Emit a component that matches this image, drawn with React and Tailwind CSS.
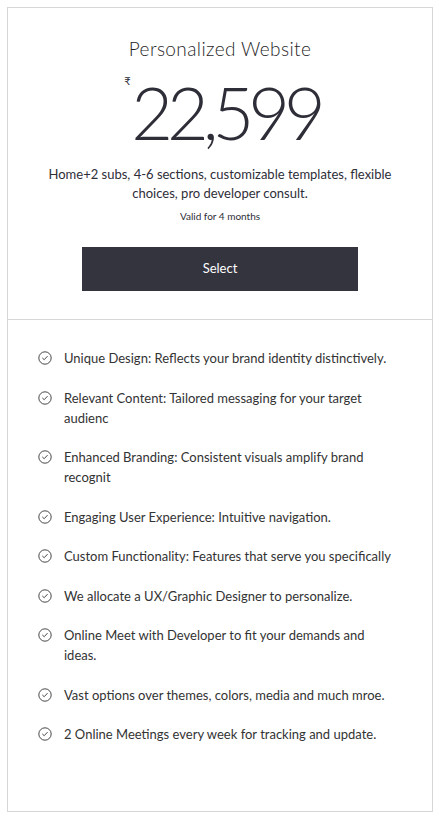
const features = [
  "Unique Design: Reflects your brand identity distinctively.",
  "Relevant Content: Tailored messaging for your target audienc",
  "Enhanced Branding: Consistent visuals amplify brand recognit",
  "Engaging User Experience: Intuitive navigation.",
  "Custom Functionality: Features that serve you specifically",
  "We allocate a UX/Graphic Designer to personalize.",
  "Online Meet with Developer to fit your demands and ideas.",
  "Vast options over themes, colors, media and much mroe.",
  "2 Online Meetings every week for tracking and update.",
];

function CheckCircle() {
  return (
    <svg width="14" height="14" viewBox="0 0 14 14" fill="none" className="shrink-0 mt-[3px]">
      <circle cx="7" cy="7" r="6.2" stroke="#333" strokeWidth="0.9" />
      <path d="M4.6 7.2 L6.2 8.7 L9.3 5.4" stroke="#333" strokeWidth="0.9" strokeLinecap="round" strokeLinejoin="round" />
    </svg>
  );
}

export default function App() {
  return (
    <div className="bg-white min-h-[817px] pt-[7px] pl-[7px]" style={{ fontFamily: "Lato, 'Open Sans', sans-serif" }}>
      <div className="w-[426px] h-[805px] border border-[#d6d6d6] flex flex-col">
        <section className="flex flex-col items-center pt-[30px] pb-[28px] border-b border-[#d6d6d6]">
          <h1 className="text-[19px] font-light text-[#1f1f28] leading-[22px] tracking-[0.4px]">
            Personalized Website
          </h1>
          <div className="relative mt-[16px] ml-[11px] flex">
            <span className="absolute -left-[7px] -top-[3px] text-[11px] text-[#2e2e38]">₹</span>
            <span className="text-[72px] font-light leading-[72px] text-[#2e2e38] tracking-[-6px]">22,599</span>
          </div>
          <p className="mt-[17px] px-[28px] text-center text-[13px] leading-[19px] text-[#2e2e38]">
            Home+2 subs, 4-6 sections, customizable templates, flexible choices, pro developer consult.
          </p>
          <p className="mt-[6px] text-[10px] text-[#2e2e38]">Valid for 4 months</p>
          <button className="mt-[23px] w-[276px] h-[44px] bg-[#34343f] text-white text-[13px]">
            Select
          </button>
        </section>
        <ul className="flex flex-col gap-[19.5px] pt-[28px] pl-[30px] pr-[36px]">
          {features.map((f) => (
            <li key={f} className="flex gap-[12px] text-[13px] leading-[20px] text-[#333]">
              <CheckCircle />
              <span>{f}</span>
            </li>
          ))}
        </ul>
      </div>
    </div>
  );
}
